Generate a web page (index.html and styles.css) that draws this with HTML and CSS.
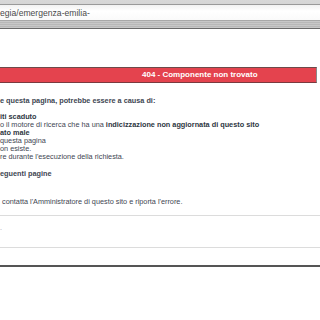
FILE: index.html
```html
<!DOCTYPE html>
<html lang="it">
<head>
    <meta charset="UTF-8">
    <title>404 - Componente non trovato</title>
    <link rel="stylesheet" href="styles.css">
</head>
<body>
    <div class="toolbar">
        <div class="address">egia/emergenza-emilia-</div>
        <div class="toolbar-foot"></div>
    </div>

    <div class="page">
        <div class="error-title">404 - Componente non trovato</div>

        <div class="message">
            <p class="strong">e questa pagina, potrebbe essere a causa di:</p>
            <ul>
                <li><b>iti scaduto</b></li>
                <li>o il motore di ricerca che ha una <b>indicizzazione non aggiornata di questo sito</b></li>
                <li><b>ato male</b></li>
                <li>questa pagina</li>
                <li>on esiste.</li>
                <li>re durante l'esecuzione della richiesta.</li>
            </ul>
            <p class="strong">eguenti pagine</p>
            <p class="contact">&nbsp;contatta l'Amministratore di questo sito e riporta l'errore.</p>
        </div>

        <div class="trace">
            <span class="trace-mark">.</span>
        </div>
        <div class="footer-line"></div>
    </div>
</body>
</html>
```

FILE: styles.css
```css
body {
    margin: 0;
    background-color: #fff;
    font-family: "Liberation Sans", Arial, sans-serif;
    overflow: hidden;
}
.toolbar {
    background: linear-gradient(#d8d8d8, #c4c4c4);
    padding-top: 4px;
    border-bottom: 1px solid #6a6a6a;
}
.address {
    height: 15px;
    line-height: 17px;
    border-top: 1px solid #9a9a9a;
    background: linear-gradient(#f2f2f2, #fff 40%, #fafafa);
    color: #4a4a4a;
    font-size: 8.6px;
}
.toolbar-foot {
    height: 7px;
    border-top: 1px solid #a8a8a8;
    background: repeating-linear-gradient(#c8c8c8 0, #c8c8c8 1px, #b8b8b8 1px, #b8b8b8 2px);
}
.page {
    padding-top: 38px;
}
.error-title {
    margin-right: 3px;
    background-color: #e4434e;
    border-top: 1px solid #6d4a4a;
    border-bottom: 1px solid #7a3a3f;
    border-right: 1px solid #8a8a8a;
    color: #fff;
    font-weight: bold;
    font-size: 8px;
    height: 14px;
    line-height: 14px;
    padding-left: 142px;
}
.message {
    color: #3e4652;
    font-size: 7.3px;
    line-height: 8px;
    padding-top: 14px;
}
.message p {
    margin: 0;
}
.strong {
    font-weight: bold;
}
.message ul {
    list-style: none;
    margin: 8px 0 9px;
    padding: 0;
}
.message b {
    color: #2e3642;
}
.contact {
    padding-top: 20px;
    padding-bottom: 9px;
}
.trace {
    border-top: 1px solid #dcdcdc;
    border-bottom: 1px solid #dcdcdc;
    height: 31px;
    line-height: 24px;
    font-size: 7px;
    color: #9aa0b0;
}
.footer-line {
    margin-top: 17px;
    border-top: 2px solid #555;
}
```
